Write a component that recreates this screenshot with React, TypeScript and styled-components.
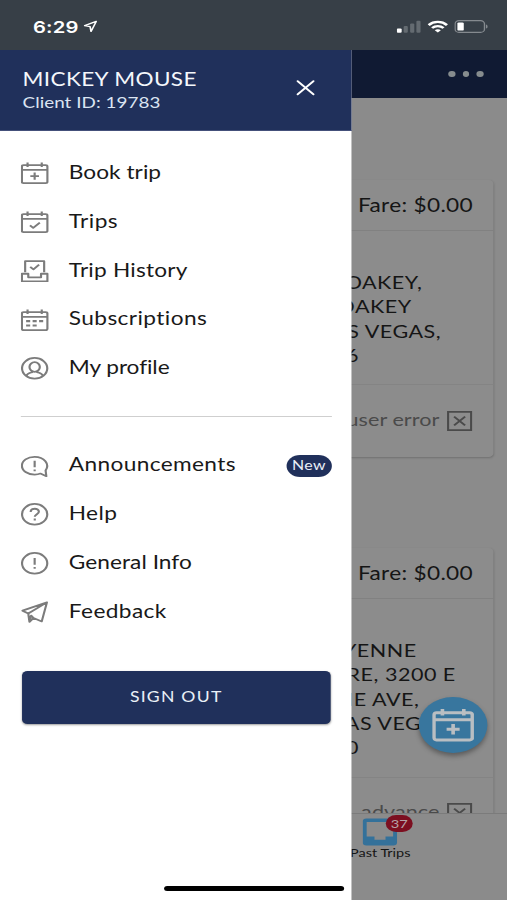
import React from "react";
import styled, { createGlobalStyle } from "styled-components";

const GlobalStyle = createGlobalStyle`
  * { box-sizing: border-box; }
  html, body { margin: 0; width: 507px; height: 900px; overflow: hidden; background: #fff; }
`;

/* The phone canvas is 414 points wide and fills a 507px wide window. */
const Viewport = styled.div`
  width: 507px;
  height: 900px;
  overflow: hidden;
`;

const Phone = styled.div`
  position: relative;
  display: flex;
  flex-direction: column;
  width: 414px;
  height: 900px;
  overflow: hidden;
  transform: scaleX(1.22464);
  transform-origin: 0 0;
  background: #8b8b8b;
  font-family: Lato, "Open Sans", sans-serif;
  color: #151515;
`;

const StatusBar = styled.header`
  display: flex;
  align-items: center;
  flex: none;
  height: 50px;
  padding: 3px 15.5px 0 27px;
  background: #373f47;
  color: #fff;
`;

const Clock = styled.span`
  font: 600 16.5px/20px Inter, sans-serif;
  letter-spacing: 0.1px;
  margin-right: 4px;
`;

const StatusIcons = styled.div`
  display: flex;
  align-items: center;
  gap: 5px;
  margin-left: auto;
`;

const TopBar = styled.div`
  display: flex;
  align-items: center;
  justify-content: flex-end;
  gap: 6px;
  flex: none;
  height: 48px;
  padding-right: 19px;
  background: #101a33;
`;

const Dot = styled.i`
  width: 5.6px;
  height: 6px;
  border-radius: 50%;
  background: #868c8e;
`;

const TripList = styled.main`
  display: flex;
  flex-direction: column;
  gap: 91px;
  flex: 1;
  min-height: 0;
  overflow: hidden;
  padding: 81.5px 10.8px 0;
`;

const Card = styled.article`
  flex: none;
  border-radius: 4px;
  background: #8c8c8c;
  box-shadow: 0 1px 2px rgba(0, 0, 0, 0.2);
`;

const FareRow = styled.div`
  height: 51px;
  padding: 14.5px 17px 0 0;
  border-bottom: 1px solid #818181;
  text-align: right;
  font-size: 18.5px;
  line-height: 23px;
  letter-spacing: 0.25px;
`;

const Address = styled.div`
  padding: 40.5px 0 16px;
  border-bottom: 1px solid #848484;
`;

const AddressLine = styled.div<{ $end: number }>`
  height: 24.3px;
  padding-right: ${(p) => p.$end}px;
  text-align: right;
  white-space: nowrap;
  font-size: 17.6px;
  line-height: 24.3px;
  letter-spacing: 0.4px;
`;

const TripStatus = styled.div`
  display: flex;
  justify-content: flex-end;
  align-items: center;
  gap: 6.5px;
  height: 71.5px;
  padding-right: 17.3px;
  color: #4a4a4a;
  font-size: 17.6px;
  letter-spacing: 0.05px;

  span { padding-bottom: 3px; }
`;

const TabBar = styled.nav`
  display: flex;
  flex-direction: column;
  flex: none;
  height: 87px;
  padding: 4px 0 0 296px;
  border-top: 1px solid #7b7b7b;
  background: #8b8b8b;
`;

const Tab = styled.div`
  display: flex;
  flex-direction: column;
  align-items: center;
  position: relative;
  width: 29px;
  white-space: nowrap;
  font-size: 11.8px;
  line-height: 14px;

  svg { flex: none; }
`;

const TabBadge = styled.b`
  position: absolute;
  left: 19px;
  top: -3px;
  width: 22px;
  height: 17px;
  border-radius: 9px;
  background: #7c0f20;
  color: #b5a2a6;
  font-size: 12px;
  font-weight: 400;
  line-height: 17px;
  text-align: center;
`;

const BookButton = styled.button`
  position: absolute;
  left: 342px;
  top: 697px;
  display: grid;
  place-items: center;
  width: 55.5px;
  height: 56px;
  padding: 0;
  border: 0;
  border-radius: 50%;
  background: #38769e;
  color: #b9bec2;
  box-shadow: 0 3px 5px rgba(0, 0, 0, 0.35);
`;

const Drawer = styled.aside`
  position: absolute;
  left: 0;
  top: 50px;
  width: 287.4px;
  height: 850px;
  background: #fff;
`;

const DrawerHeader = styled.div`
  display: flex;
  justify-content: space-between;
  align-items: flex-start;
  height: 80.5px;
  padding: 17px 30px 0 18.4px;
  border-bottom: 1px solid #44507a;
  background: #20305b;
  color: #f4f7fb;

  svg { margin-top: 12.5px; }
`;

const ClientName = styled.div`
  font-size: 18.4px;
  line-height: 24px;
  letter-spacing: 0.3px;
`;

const ClientId = styled.div`
  font-size: 15.4px;
  line-height: 22px;
  letter-spacing: 0.03px;
  color: #dbe4f2;
`;

const Menu = styled.ul`
  margin: 0;
  padding: 18.7px 16.6px 0 17.2px;
  list-style: none;
`;

const MenuItem = styled.li`
  display: flex;
  align-items: center;
  height: 48.8px;
  color: #7c7c7c;
`;

const MenuLabel = styled.span<{ $spacing: number }>`
  flex: 1;
  padding: 0 0 3px 16.4px;
  color: #191919;
  font-size: 18.5px;
  line-height: 24px;
  letter-spacing: ${(p) => p.$spacing}px;
`;

const NewBadge = styled.span`
  width: 37px;
  height: 22px;
  border-radius: 11px;
  background: #20305b;
  color: #e9eef6;
  font-size: 13px;
  line-height: 21px;
  letter-spacing: 0.3px;
  text-align: center;
`;

const Divider = styled.hr`
  height: 1px;
  margin: 23px 16.4px 6px 17.2px;
  border: 0;
  background: #cfcfcf;
`;

const SignOut = styled.button`
  display: block;
  width: 251.6px;
  height: 53px;
  margin: 34.7px 0 0 18.1px;
  padding: 0 0 2px;
  border: 0;
  border-radius: 4.5px;
  background: #20305b;
  box-shadow: 0 1px 2px rgba(0, 0, 0, 0.4);
  color: #eaf0f7;
  font: 14.4px/20px Lato, sans-serif;
  letter-spacing: 1px;
`;

const HomeIndicator = styled.div`
  position: absolute;
  left: 133.5px;
  top: 885.5px;
  width: 147.5px;
  height: 5.5px;
  border-radius: 3px;
  background: #000;
`;

type IconName =
  | "book" | "trips" | "history" | "subs" | "profile"
  | "announce" | "help" | "info" | "feedback";

const calendar = (
  <>
    <rect x="0.9" y="3.2" width="21.2" height="18.4" rx="1.4" />
    <path d="M0.8 8H22.2M5.6 0.6V5M17.4 0.6V5" />
  </>
);

const shapes: Record<IconName, React.ReactNode> = {
  book: <>{calendar}<path d="M11.5 10.8V18M7.9 14.4H15.1" /></>,
  trips: <>{calendar}<path d="M7.6 14.6L10.3 17.2L15.8 11.8" /></>,
  history: (
    <>
      <path d="M3.6 12.4V1.2H19.4V12.4M7.8 7L10.5 9.6L15.2 4.8" />
      <path d="M0.9 14H6.2V17.6H16.8V14H22.1V21.8H0.9Z" />
    </>
  ),
  subs: (
    <>
      {calendar}
      <path d="M4.4 12.4H7.8M9.8 12.4H13.2M15.2 12.4H18.6M4.4 16.8H7.8M9.8 16.8H13.2" strokeWidth="2.2" />
    </>
  ),
  profile: (
    <>
      <circle cx="11.5" cy="11.5" r="10.5" />
      <ellipse cx="11.5" cy="10.2" rx="4.3" ry="4.9" />
      <path d="M4.6 19.2C5.2 16.6 7.2 16.3 9.4 15.4V14.2M18.4 19.2C17.8 16.6 15.8 16.3 13.6 15.4V14.2" />
    </>
  ),
  announce: (
    <>
      <path d="M20.6 15.8C24.4 9.4 19.4 1.9 11.5 1.9C5.5 1.9 0.9 5.9 0.9 10.9C0.9 15.9 5.5 19.9 11.5 19.9C13.3 19.9 14.9 19.6 16.3 18.9L21.2 21.6Z" />
      <path d="M11.5 5.8V12.4M11.5 14.8V16.6" />
    </>
  ),
  help: (
    <>
      <circle cx="11.5" cy="11.5" r="10.5" />
      <path d="M8.2 9.1C8.2 4.8 15 4.8 15 8.9C15 11.4 11.6 11.4 11.6 14.1M11.6 15.9V17.8" />
    </>
  ),
  info: (
    <>
      <circle cx="11.5" cy="11.5" r="10.5" />
      <path d="M11.5 6V13M11.5 15.2V17" />
    </>
  ),
  feedback: (
    <path d="M21.7 1.4L1.4 9.8L6.2 12.8L7.2 21.2L10.6 17.3L17.4 20.8L21.7 1.4ZM21.7 1.4L6.2 12.8M7.2 21.2L8.6 14.8L10.6 17.3" />
  ),
};

const Icon = ({ name, size = 22.6, weight = 1.8 }: { name: IconName; size?: number; weight?: number }) => (
  <svg width={size} height={size} viewBox="0 0 23 23" fill="none" stroke="currentColor" strokeWidth={weight} strokeLinejoin="round">
    {shapes[name]}
  </svg>
);

const CancelledIcon = () => (
  <svg width="20.6" height="20" viewBox="0 0 20.6 20" fill="none" stroke="#4a4a4a" strokeWidth="1.7">
    <path d="M0.9 0.9H19.7V19.1H0.9ZM5.8 5.6L14.8 14.4M14.8 5.6L5.8 14.4" />
  </svg>
);

interface Entry { icon: IconName; label: string; spacing: number; isNew?: boolean }

const primary: Entry[] = [
  { icon: "book", label: "Book trip", spacing: 0.03 },
  { icon: "trips", label: "Trips", spacing: 0.35 },
  { icon: "history", label: "Trip History", spacing: 0.17 },
  { icon: "subs", label: "Subscriptions", spacing: 0.33 },
  { icon: "profile", label: "My profile", spacing: -0.06 },
];

const secondary: Entry[] = [
  { icon: "announce", label: "Announcements", spacing: 0.3, isNew: true },
  { icon: "help", label: "Help", spacing: 0.3 },
  { icon: "info", label: "General Info", spacing: 0.04 },
  { icon: "feedback", label: "Feedback", spacing: 0.33 },
];

const renderEntry = (e: Entry) => (
  <MenuItem key={e.label}>
    <Icon name={e.icon} />
    <MenuLabel $spacing={e.spacing}>{e.label}</MenuLabel>
    {e.isNew && <NewBadge>New</NewBadge>}
  </MenuItem>
);

const SecondaryMenu = styled(Menu)`
  padding-top: 18.3px;
`;

interface Trip { lines: [string, number][]; status: string }

const trips: Trip[] = [
  { lines: [["OAKEY,", 58.3], ["OAKEY", 67.1], ["LAS VEGAS,", 43], ["6", 110]], status: "user error" },
  { lines: [["CHEYENNE", 63], ["RE, 3200 E", 31], ["NE AVE,", 60.8], ["LAS VEGAS,", 32.7], ["0", 110]], status: "advance" },
];

export default function App() {
  return (
    <>
      <GlobalStyle />
      <Viewport>
        <Phone>
          <StatusBar>
            <Clock>6:29</Clock>
            <svg width="11.5" height="13" viewBox="0 0 12 13" fill="none" stroke="#fff" strokeWidth="1.4" strokeLinejoin="round">
              <path d="M11 1.2L1.2 5.6L5.8 6.6L6.6 11.6Z" />
            </svg>
            <StatusIcons>
              <svg width="20" height="13" viewBox="0 0 20 13">
                <rect x="0" y="8.4" width="4" height="4.4" rx="1" fill="#fff" />
                <g fill="#646b71">
                  <rect x="5.6" y="6" width="3.4" height="6.8" rx="1" />
                  <rect x="10.9" y="3.4" width="3.4" height="9.4" rx="1" />
                  <rect x="16" y="0.8" width="3.4" height="12" rx="1" />
                </g>
              </svg>
              <svg width="17" height="13" viewBox="0 0 17 13" fill="none" stroke="#fff" strokeWidth="2.3">
                <path d="M1 5.1C5.2 0.9 11.8 0.9 16 5.1M3.8 8C6.5 5.4 10.5 5.4 13.2 8" />
                <path d="M8.5 12.6L6 10.2C7.4 8.9 9.6 8.9 11 10.2Z" fill="#fff" stroke="none" />
              </svg>
              <svg width="28" height="13" viewBox="0 0 28 13">
                <rect x="0.6" y="0.6" width="24" height="11.8" rx="3.2" fill="none" stroke="#858a8f" strokeWidth="1.1" />
                <rect x="2.5" y="2.4" width="5.2" height="8.2" rx="1.2" fill="#fff" />
                <path d="M25.8 4.4C27.6 5 27.6 8 25.8 8.6Z" fill="#858a8f" />
              </svg>
            </StatusIcons>
          </StatusBar>

          <TopBar><Dot /><Dot /><Dot /></TopBar>

          <TripList>
            {trips.map((t) => (
              <Card key={t.status}>
                <FareRow>Fare: $0.00</FareRow>
                <Address>
                  {t.lines.map(([text, end], i) => (
                    <AddressLine key={i} $end={end}>{text}</AddressLine>
                  ))}
                </Address>
                <TripStatus><span>{t.status}</span><CancelledIcon /></TripStatus>
              </Card>
            ))}
          </TripList>

          <TabBar>
            <Tab>
              <svg width="28.5" height="28" viewBox="0 0 28.5 28">
                <rect x="0.2" y="0.5" width="28" height="27" rx="3" fill="#34719a" />
                <path d="M3.4 4H25V18.6H18.8V21.8H9.8V18.6H3.4Z" fill="#8b8b8b" />
              </svg>
              Past Trips
              <TabBadge>37</TabBadge>
            </Tab>
          </TabBar>

          <BookButton><Icon name="book" size={34} weight={2} /></BookButton>

          <Drawer>
            <DrawerHeader>
              <div>
                <ClientName>MICKEY MOUSE</ClientName>
                <ClientId>Client ID: 19783</ClientId>
              </div>
              <svg width="15" height="16" viewBox="0 0 15 16" stroke="#fff" strokeWidth="1.8" strokeLinecap="round">
                <path d="M1 1.2L14 14.4M14 1.2L1 14.4" />
              </svg>
            </DrawerHeader>
            <Menu>{primary.map(renderEntry)}</Menu>
            <Divider />
            <SecondaryMenu>{secondary.map(renderEntry)}</SecondaryMenu>
            <SignOut>SIGN OUT</SignOut>
          </Drawer>

          <HomeIndicator />
        </Phone>
      </Viewport>
    </>
  );
}
